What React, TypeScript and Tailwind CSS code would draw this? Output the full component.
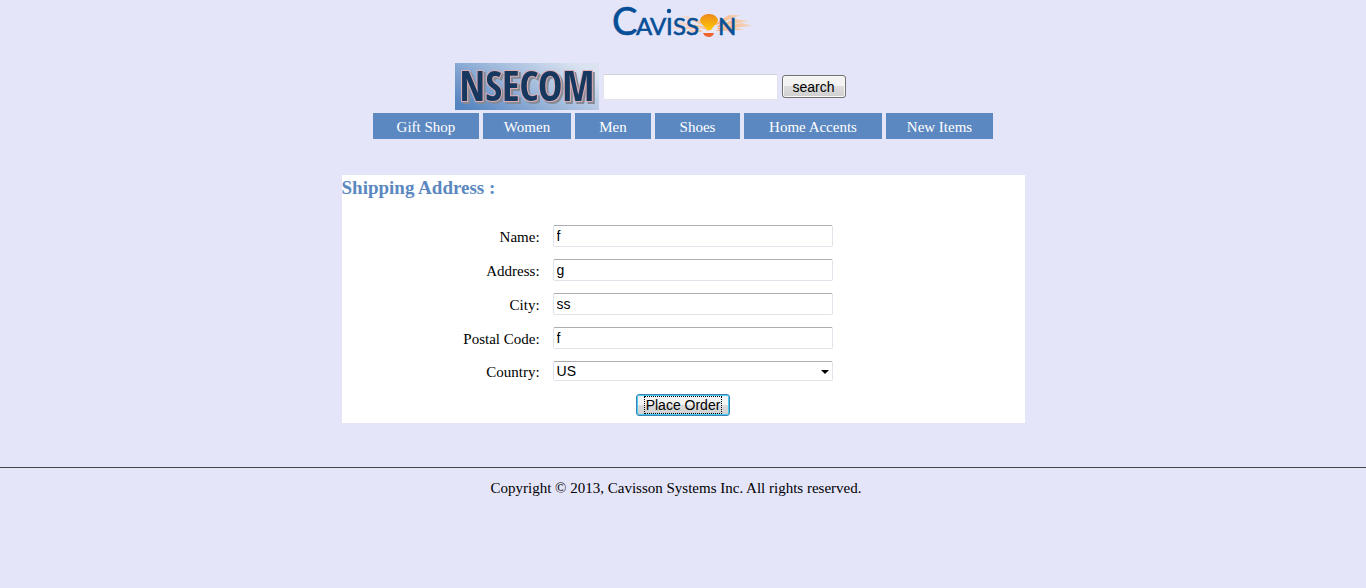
import React from "react";

const categories = [
  { label: "Gift Shop", width: "w-[106px]" },
  { label: "Women", width: "w-[88px]" },
  { label: "Men", width: "w-[76px]" },
  { label: "Shoes", width: "w-[85px]" },
  { label: "Home Accents", width: "w-[138px]" },
  { label: "New Items", width: "w-[107px]" },
];

const fields = [
  { id: "name", label: "Name:", value: "f" },
  { id: "address", label: "Address:", value: "g" },
  { id: "city", label: "City:", value: "ss" },
  { id: "postal", label: "Postal Code:", value: "f" },
];

const control =
  "w-full rounded-xs border border-[#e2e3ea] border-t-[#abadb3] bg-white px-[3px] font-['Liberation_Sans',Arial,sans-serif] text-sm leading-4 outline-none";

function CavissonLogo() {
  return (
    <svg className="overflow-visible" width="144" height="40" viewBox="0 0 144 40" role="img" aria-label="Cavisson">
      <defs>
        <linearGradient id="sun" x1="0" y1="0" x2="0" y2="1">
          <stop offset="0" stopColor="#ee8a1d" />
          <stop offset="1" stopColor="#fcc800" />
        </linearGradient>
        <linearGradient id="rayLeft" x1="1" y1="0" x2="0" y2="0">
          <stop offset="0" stopColor="#f9b77c" />
          <stop offset="1" stopColor="#f6d9cc" stopOpacity="0.5" />
        </linearGradient>
        <linearGradient id="rayRight" x1="0" y1="0" x2="1" y2="0">
          <stop offset="0" stopColor="#f9ae6c" />
          <stop offset="1" stopColor="#f8cfae" stopOpacity="0.7" />
        </linearGradient>
      </defs>
      <g fill="url(#rayLeft)">
        <path d="M97 27 68 16l8 0 22 8Z" />
        <path d="M97 28 55 23l14-1 28 5Z" />
        <path d="M98 29 56 29l12-3 30 2Z" />
        <path d="M98 31 66 34l12-4 20 0Z" />
      </g>
      <g fill="url(#rayRight)">
        <path d="M104 24 118 15l12 0-25 10Z" />
        <path d="M106 26 124 19l14 2-31 6Z" />
        <path d="M106 28 130 23l12 3-35 3Z" />
        <path d="M106 30 124 27l9 3-28 1Z" />
      </g>
      <text y="35" fill="#064f96" stroke="#064f96" strokeWidth="0.6" fontFamily="Lato, sans-serif" fontSize="24">
        <tspan x="1" fontSize="38">C</tspan>
        <tspan x="25">A</tspan>
        <tspan x="39">V</tspan>
        <tspan x="55">I</tspan>
        <tspan x="62">S</tspan>
        <tspan x="75">S</tspan>
        <tspan x="107">N</tspan>
      </text>
      <circle cx="58" cy="11" r="2.2" fill="#064f96" />
      <path d="M89 20c1-4 5-6 9-6s8 2 9 6c0 2-2 4-4 6l-3 4h-4l-3-4c-2-2-4-4-4-6Z" fill="url(#sun)" />
      <path d="M89 27l5 3 4 1 4-1 5-3-3 6h-12Z" fill="#ebe9f5" />
      <path d="M92 33h11c-1 3-3 4-5 4s-5-1-6-4Z" fill="#f0612d" />
    </svg>
  );
}

function NsecomLogo() {
  return (
    <svg width="144" height="47" viewBox="0 0 144 47" role="img" aria-label="NSECOM">
      <defs>
        <linearGradient id="plate" x1="0" y1="0.85" x2="1" y2="0.3">
          <stop offset="0" stopColor="#5484c1" />
          <stop offset="0.5" stopColor="#9bb6da" />
          <stop offset="1" stopColor="#dbe3f1" />
        </linearGradient>
        <filter id="letterShadow" x="-5%" y="-5%" width="115%" height="120%">
          <feDropShadow dx="2" dy="2" stdDeviation="0.3" floodColor="#858b97" />
        </filter>
      </defs>
      <rect width="144" height="47" fill="url(#plate)" />
      <text
        x="72"
        y="38"
        fontFamily="'Open Sans Condensed', 'Liberation Sans Narrow', 'Liberation Sans', sans-serif"
        fontWeight="700"
        fontSize="41"
        textAnchor="middle"
        fill="#17375f"
        stroke="#dcaeb4"
        strokeWidth="2"
        paintOrder="stroke"
        filter="url(#letterShadow)"
      >
        NSECOM
      </text>
    </svg>
  );
}

export default function App() {
  return (
    <div className="min-h-screen bg-[#e5e5fa] font-['Liberation_Serif','Times_New_Roman',serif] text-[15px] text-black">
      <header className="flex flex-col items-center">
        <a href="#home" className="block h-[63px]">
          <CavissonLogo />
        </a>
        <form className="flex items-center pr-[66px]" onSubmit={(e) => e.preventDefault()}>
          <a href="#nsecom" className="mr-1 block">
            <NsecomLogo />
          </a>
          <input
            type="text"
            aria-label="Search"
            className="mr-1 h-[26px] w-[175px] rounded-xs border border-[#e2e3ea] border-t-[#d0d0dc] bg-white px-1 font-['Liberation_Sans',Arial,sans-serif] text-sm outline-none"
          />
          <button
            type="submit"
            className="h-[23px] w-16 rounded-[3px] border border-[#707070] bg-linear-to-b from-[#f3f3f3] from-50% via-[#dddddd] via-50% to-[#cfcfcf] font-['Liberation_Sans',Arial,sans-serif] text-sm leading-4 shadow-[inset_0_0_0_1px_#f8f8f8]"
          >
            search
          </button>
        </form>
        <nav className="mt-[3px] flex gap-1">
          {categories.map((c) => (
            <a
              key={c.label}
              href="#category"
              className={`block bg-[#5b88c1] pt-[5px] pb-[3px] text-center leading-[18px] whitespace-nowrap text-white ${c.width}`}
            >
              {c.label}
            </a>
          ))}
        </nav>
      </header>

      <main className="mx-auto mt-9 w-1/2 bg-white pb-[7px]">
        <h1 className="text-[19px] leading-[26px] font-bold text-[#5b88c1]">Shipping Address :</h1>
        <form onSubmit={(e) => e.preventDefault()}>
          <div className="mt-6 grid grid-cols-[29%_41%] items-center gap-x-[13px] gap-y-3">
            {fields.map((f) => (
              <React.Fragment key={f.id}>
                <label htmlFor={f.id} className="pt-0.5 text-right leading-5">
                  {f.label}
                </label>
                <input id={f.id} type="text" defaultValue={f.value} className={`${control} h-[22px]`} />
              </React.Fragment>
            ))}
            <label htmlFor="country" className="pt-0.5 text-right leading-[18px]">
              Country:
            </label>
            <div className="relative flex">
              <select id="country" defaultValue="US" className={`${control} h-5 appearance-none`}>
                <option>US</option>
              </select>
              <svg
                className="pointer-events-none absolute top-[9px] right-1"
                width="8"
                height="4"
                viewBox="0 0 8 4"
                aria-hidden="true"
              >
                <path d="M0 0h8L4 4Z" fill="#000" />
              </svg>
            </div>
          </div>
          <div className="mt-[13px] flex justify-center">
            <button
              type="submit"
              className="h-[22px] w-[94px] rounded-[3px] border border-[#3c7fb1] bg-linear-to-b from-[#f3f3f3] from-50% via-[#dddddd] via-50% to-[#cfcfcf] px-[7px] py-px font-['Liberation_Sans',Arial,sans-serif] text-sm leading-4 whitespace-nowrap shadow-[inset_0_0_0_1px_#48cdf4]"
            >
              <span className="flex justify-center border border-dotted border-black">Place Order</span>
            </button>
          </div>
        </form>
      </main>

      <footer className="mt-11 border-t border-[#444444] pt-[11px] pr-[14px] text-center leading-[18px]">
        Copyright © 2013, Cavisson Systems Inc. All rights reserved.
      </footer>
    </div>
  );
}
